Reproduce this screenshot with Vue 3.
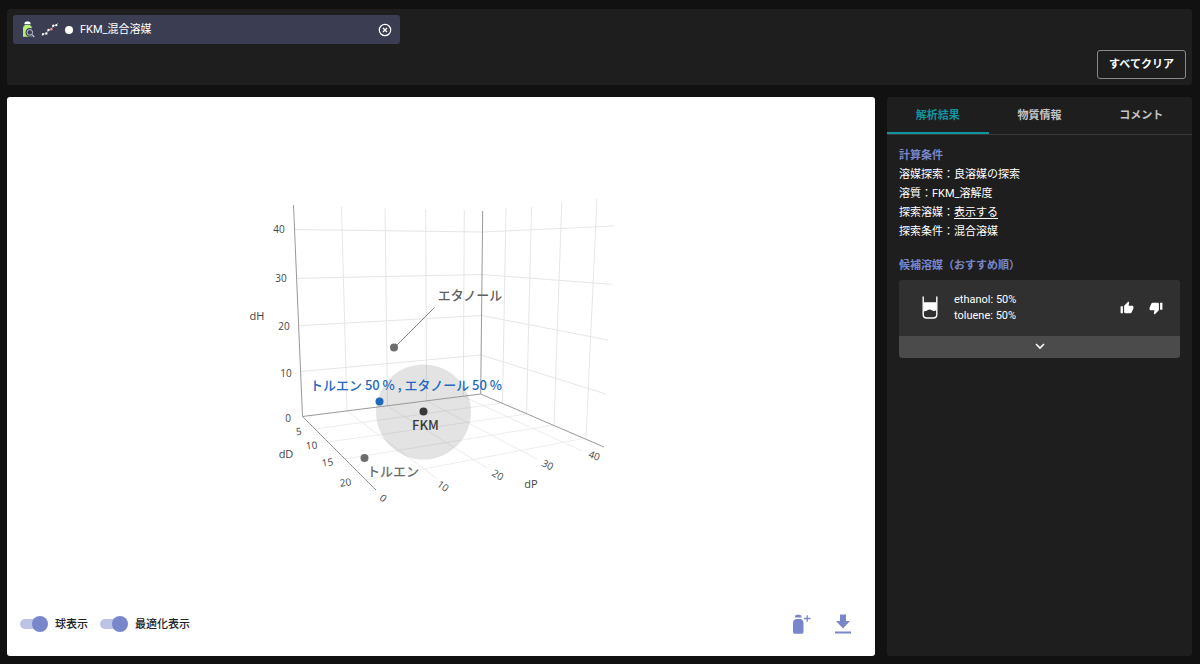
<script setup>
import { ref } from 'vue'

const tabs = ['解析結果', '物質情報', 'コメント']
const activeTab = ref(0)
const showSphere = ref(true)
const showOptimized = ref(true)

const conditions = [
  { label: '溶媒探索', value: '良溶媒の探索' },
  { label: '溶質', value: 'FKM_溶解度' },
  { label: '探索溶媒', value: '表示する', link: true },
  { label: '探索条件', value: '混合溶媒' },
]

const gridLines = [
  'M341.5 207L347 411', 'M385 208L387.5 406', 'M425.7 209L426.5 401', 'M464.3 210L463.3 396.5',
  'M506 208L502.5 403', 'M531.5 207L526.5 414', 'M561.8 202L554 425', 'M597 199L586 438',
  'M294 229.5L482.5 232L614.5 226', 'M297 278.3L482 274.5L611.5 284.3',
  'M299 325.7L481.5 315.5L608 340', 'M301 371.5L481 355L606 394',
]
const floorLines = [
  'M315 429L502.5 403', 'M328 442L526.5 414', 'M345 459L554 425', 'M366 480L586 438',
  'M347 411L436.7 478.5', 'M387.5 406L487 468', 'M426.5 401L537 459', 'M463.3 396.5L582 451',
]

const ticks = [
  { t: '40', x: 279, y: 233 }, { t: '30', x: 281, y: 282 }, { t: '20', x: 284, y: 330 },
  { t: '10', x: 286, y: 377 }, { t: '0', x: 288, y: 422 },
  { t: '5', x: 299, y: 435, r: -5 }, { t: '10', x: 312, y: 449, r: -6 },
  { t: '15', x: 328, y: 466, r: -8 }, { t: '20', x: 346, y: 486, r: -8 },
  { t: '0', x: 381, y: 501, r: 38 }, { t: '10', x: 441, y: 489, r: 35 },
  { t: '20', x: 496, y: 478, r: 31 }, { t: '30', x: 546, y: 468, r: 27 },
  { t: '40', x: 593, y: 459, r: 20 },
]
const rotation = (k) => (k.r ? `rotate(${k.r} ${k.x} ${k.y})` : undefined)
</script>

<template>
  <div class="page">
    <header class="topbar">
      <div class="chip">
        <svg class="chip-bottle" viewBox="0 0 13 17" aria-hidden="true">
          <path d="M2.5 2.2Q2.5.5 4.5.5H6.5Q8.5.5 8.5 2.2V3.2H2.5Z" fill="#fff" />
          <path d="M3 4H8Q9.8 5.2 9.8 7V15.8H1V7Q1 5.2 3 4Z" fill="#b5ec7b" />
          <circle cx="7.8" cy="11.4" r="3.3" fill="#36394a" stroke="#36394a" stroke-width="2" />
          <circle cx="7.8" cy="11.4" r="2.8" fill="#3b4053" stroke="#c9d0e2" stroke-width="1" />
          <path d="M10 13.7L12.2 16" stroke="#c9d0e2" stroke-width="1.1" />
        </svg>
        <svg class="chip-chain" viewBox="0 0 18 16" aria-hidden="true">
          <path d="M1 14L2 12.2L5.3 11.5L7.5 8L10.2 7.3L12.3 3.8L15.3 3.2L17 1" fill="none" stroke="#a6a9b6" stroke-width=".8" />
          <g fill="#fff">
            <circle cx="2" cy="12.2" r="1.1" /><circle cx="5.3" cy="11.5" r="1.2" /><circle cx="7.5" cy="8" r="1.2" />
            <circle cx="12.3" cy="3.8" r="1.2" /><circle cx="15.3" cy="3.2" r="1.1" />
          </g>
          <circle cx="10.2" cy="7.3" r="1.3" fill="#ef8a80" />
        </svg>
        <span class="chip-dot"></span>
        <span class="chip-name">FKM_混合溶媒</span>
        <button class="icon-btn" type="button" aria-label="削除">
          <svg width="14" height="14" viewBox="0 0 14 14" fill="none" stroke="#fff">
            <circle cx="7" cy="7" r="5.7" stroke-width="1.2" />
            <path d="M5 5L9 9M9 5L5 9" stroke-width="1.4" />
          </svg>
        </button>
      </div>
      <button class="clear" type="button">すべてクリア</button>
    </header>

    <main class="content">
      <section class="plot">
        <svg class="chart" viewBox="7 97 868 495" role="img" aria-label="dD dP dH">
          <g fill="none" stroke="#e6e6e6" stroke-width="1"><path v-for="d in gridLines" :key="d" :d="d" /></g>
          <g fill="none" stroke="#ededed" stroke-width="1"><path v-for="d in floorLines" :key="d" :d="d" /></g>
          <circle v-if="showSphere" cx="423.5" cy="412" r="47.5" fill="#8c8c8c" fill-opacity=".24" />
          <path d="M293.5 205L302.5 416.5L376 490M302.5 416.5L480.7 394L604 447M482.7 211L480.7 394" fill="none" stroke="#999" stroke-width="1" />
          <g class="tick">
            <text v-for="(k, i) in ticks" :key="i" :x="k.x" :y="k.y" :transform="rotation(k)">{{ k.t }}</text>
          </g>
          <g class="axis">
            <text x="257" y="320">dH</text>
            <text x="286" y="458">dD</text>
            <text x="531" y="488">dP</text>
          </g>
          <path d="M394 348L434.5 307.5" stroke="#888" stroke-width="1" />
          <circle cx="394" cy="347.5" r="4" fill="#6e6e6e" />
          <circle cx="364.5" cy="458" r="4" fill="#6e6e6e" />
          <circle cx="423.5" cy="411.5" r="4" fill="#3a3a3a" />
          <circle cx="379.5" cy="401.5" r="4" fill="#2268bd" />
          <g class="point">
            <text x="470" y="300" fill="#5f5f5f">エタノール</text>
            <text x="393" y="476" fill="#6b6b6b">トルエン</text>
            <text x="425.5" y="430" fill="#3a3a3a">FKM</text>
            <text x="406" y="390" fill="#2268bd">トルエン 50 % , エタノール 50 %</text>
          </g>
        </svg>
        <div class="controls">
          <label class="switch"><input v-model="showSphere" type="checkbox" />球表示</label>
          <label class="switch"><input v-model="showOptimized" type="checkbox" />最適化表示</label>
          <div class="actions">
            <button class="icon-btn" type="button" aria-label="溶媒を追加">
              <svg width="20" height="22" viewBox="0 0 20 22" fill="#7986cb">
                <path d="M3 4.6V3.8Q3 1.8 5 1.8H7.5Q9.5 1.8 9.5 3.8V4.6Z" />
                <path d="M4 6H9Q11.500 7 11.500 10V19Q11.500 20.800 10 20.800H2.500Q1 20.800 1 19V10Q1 7 4 6Z" />
                <path d="M12 5.500H18.500M15.200 2.300V8.700" stroke="#7986cb" stroke-width="1.3" />
              </svg>
            </button>
            <button class="icon-btn" type="button" aria-label="ダウンロード">
              <svg width="18" height="22" viewBox="0 0 18 22" fill="#7986cb">
                <path d="M6 1.500H12V8H16L9 15.500L2 8H6ZM1 18.400H17V20.400H1Z" />
              </svg>
            </button>
          </div>
        </div>
      </section>

      <aside class="side">
        <nav class="tabs" role="tablist">
          <button v-for="(tab, i) in tabs" :key="tab" type="button" role="tab" class="tab"
            :class="{ active: i === activeTab }" :aria-selected="i === activeTab" @click="activeTab = i">{{ tab }}</button>
        </nav>
        <div class="details">
          <h2>計算条件</h2>
          <p v-for="c in conditions" :key="c.label">
            {{ c.label }}：<a v-if="c.link" href="#">{{ c.value }}</a><template v-else>{{ c.value }}</template>
          </p>
          <h2 class="second">候補溶媒（おすすめ順）</h2>
          <article class="card">
            <div class="card-body">
              <svg class="beaker" width="18" height="24" viewBox="0 0 18 24" fill="none">
                <path d="M2.200 .500V18.500Q2.200 22 5.700 22H12.300Q15.800 22 15.800 18.500V.500" stroke="#fff" stroke-width="1.4" />
                <path d="M2.500 6.200H15.500V14Q13 15.700 10.800 14.300T6.500 14.200Q4.500 15.700 2.500 15Z" fill="#fff" />
              </svg>
              <div class="mix"><div>ethanol: 50%</div><div>toluene: 50%</div></div>
              <button class="icon-btn" type="button" aria-label="良い">
                <svg width="14" height="14" viewBox="0 0 24 24" fill="#fff">
                  <path d="M1 21h4V9H1v12zm22-11c0-1.100-.9-2-2-2h-6.310l.95-4.570.03-.32c0-.41-.17-.79-.44-1.060L14.170 1 7.590 7.590C7.220 7.950 7 8.450 7 9v10c0 1.100.9 2 2 2h9c.83 0 1.540-.5 1.840-1.220l3.020-7.050c.09-.23.14-.47.14-.73v-2z" />
                </svg>
              </button>
              <button class="icon-btn" type="button" aria-label="良くない">
                <svg width="14" height="14" viewBox="0 0 24 24" fill="#fff">
                  <path transform="rotate(180 12 12)" d="M1 21h4V9H1v12zm22-11c0-1.100-.9-2-2-2h-6.310l.95-4.570.03-.32c0-.41-.17-.79-.44-1.060L14.170 1 7.590 7.590C7.220 7.950 7 8.450 7 9v10c0 1.100.9 2 2 2h9c.83 0 1.540-.5 1.840-1.220l3.020-7.050c.09-.23.14-.47.14-.73v-2z" />
                </svg>
              </button>
            </div>
            <button class="expand" type="button" aria-label="詳細を開く">
              <svg width="12" height="8" viewBox="0 0 12 8" fill="none" stroke="#fff" stroke-width="1.6"><path d="M2 2L6 6L10 2" /></svg>
            </button>
          </article>
        </div>
      </aside>
    </main>
  </div>
</template>

<style>
html, body { background: #111; }
</style>

<style scoped>
* { box-sizing: border-box; }
.page {
  min-height: 100vh;
  display: flex;
  flex-direction: column;
  gap: 12px;
  padding: 9px 8px 8px 7px;
  background: #111;
  color: #fff;
  font: 11px/19px Roboto, "Noto Sans CJK JP", sans-serif;
}
button { font: inherit; color: inherit; background: none; border: 0; padding: 0; cursor: pointer; }
.icon-btn { display: flex; }
.topbar {
  display: flex;
  flex-direction: column;
  gap: 6px;
  padding: 6px;
  background: #1e1e1e;
  border-radius: 3px;
}
.chip {
  display: flex;
  align-items: center;
  width: 33%;
  height: 29px;
  padding: 0 8px 0 9px;
  background: #3b3e52;
  border-radius: 3px;
}
.chip-bottle { width: 13px; height: 17px; margin-right: 6px; }
.chip-chain { width: 18px; height: 16px; margin-right: 6px; }
.chip-dot { width: 8px; height: 8px; margin-right: 7px; border-radius: 50%; background: #fff; }
.chip-name { flex: 1; }
.clear {
  align-self: flex-end;
  width: 89px;
  height: 29px;
  border: 1px solid #8a8a8a;
  border-radius: 3px;
  font-weight: 700;
}
.content { flex: 1; display: grid; grid-template-columns: minmax(0, 1fr) 305px; gap: 12px; }
.plot { display: flex; flex-direction: column; background: #fff; border-radius: 3px; color: #222; }
.chart { display: block; flex: 1; width: 100%; min-height: 0; }
.tick text, .axis text { text-anchor: middle; fill: #444; font-family: "Open Sans", sans-serif; }
.tick text { font-size: 10px; }
.axis text { font-size: 11px; }
.point text { text-anchor: middle; font: 500 13px "Noto Sans CJK JP", sans-serif; }
.controls { display: flex; align-items: center; gap: 12px; height: 64px; padding: 0 23px 0 13px; }
.switch { display: flex; align-items: center; gap: 7px; font-weight: 500; cursor: pointer; }
.switch input {
  appearance: none;
  position: relative;
  width: 28px;
  height: 16px;
  margin: 0;
  cursor: pointer;
}
.switch input::before {
  content: "";
  position: absolute;
  inset: 3px 4px 3px 0;
  border-radius: 5px;
  background: #bcc3e5;
}
.switch input::after {
  content: "";
  position: absolute;
  top: 0;
  left: 0;
  width: 16px;
  height: 16px;
  border-radius: 50%;
  background: #f5f5f5;
}
.switch input:checked::after { left: 12px; background: #7986cb; }
.actions { display: flex; align-items: center; gap: 22px; margin-left: auto; }
.side { background: #1e1e1e; border-radius: 3px; }
.tabs { display: grid; grid-template-columns: repeat(3, 1fr); height: 38px; border-bottom: 1px solid #383838; }
.tab { height: 37px; padding-top: 2px; font-weight: 700; color: #c4c4c4; border-bottom: 2px solid transparent; }
.tab.active { color: #12949f; border-color: #12949f; }
.details { padding: 11px 12px; }
h2, p { margin: 0; font-size: 11px; line-height: 19px; font-weight: 400; }
h2 { color: #7986cb; font-weight: 700; }
.second { margin-top: 15px; }
a { color: inherit; text-decoration: underline; text-underline-offset: 2px; }
.card { margin-top: 5px; border-radius: 3px; overflow: hidden; background: #303030; }
.card-body { display: flex; align-items: center; height: 56px; padding: 0 17px 0 22px; gap: 15px; }
.mix { flex: 1; line-height: 16px; }
.expand { display: flex; align-items: center; justify-content: center; width: 100%; height: 22px; padding-bottom: 3px; background: #4b4b4b; border-radius: 0 0 3px 3px; }
</style>
